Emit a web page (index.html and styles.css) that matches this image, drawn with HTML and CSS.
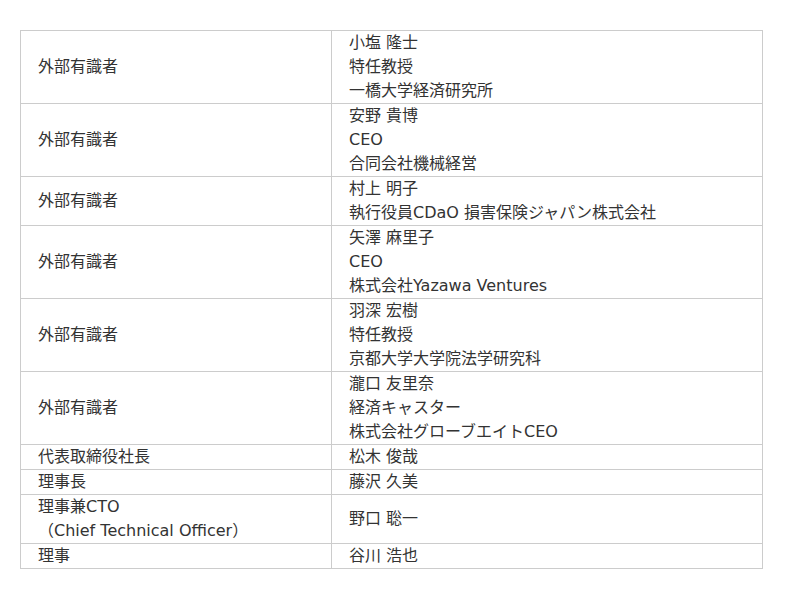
FILE: index.html
```html
<!DOCTYPE html>
<html lang="ja">
<head>
<meta charset="utf-8">
<link rel="stylesheet" href="styles.css">
</head>
<body>
<div class="wrap">
<table class="members">
<colgroup><col class="c1"><col class="c2"></colgroup>
<tbody>
<tr><td>外部有識者</td><td>小塩 隆士<br>特任教授<br>一橋大学経済研究所</td></tr>
<tr><td>外部有識者</td><td>安野 貴博<br>CEO<br>合同会社機械経営</td></tr>
<tr><td>外部有識者</td><td>村上 明子<br>執行役員CDaO 損害保険ジャパン株式会社</td></tr>
<tr><td>外部有識者</td><td>矢澤 麻里子<br>CEO<br>株式会社Yazawa Ventures</td></tr>
<tr><td>外部有識者</td><td>羽深 宏樹<br>特任教授<br>京都大学大学院法学研究科</td></tr>
<tr><td>外部有識者</td><td>瀧口 友里奈<br>経済キャスター<br>株式会社グローブエイトCEO</td></tr>
<tr><td>代表取締役社長</td><td>松木 俊哉</td></tr>
<tr><td>理事長</td><td>藤沢 久美</td></tr>
<tr><td>理事兼CTO<br>（Chief Technical Officer）</td><td>野口 聡一</td></tr>
<tr><td>理事</td><td>谷川 浩也</td></tr>
</tbody>
</table>
</div>
</body>
</html>
```
FILE: styles.css
```css
html, body {
  margin: 0;
  padding: 0;
  background: #fff;
}
.wrap {
  padding: 30px 20px;
}
.members {
  border-collapse: collapse;
  table-layout: fixed;
  width: 742px;
  font-family: "DejaVu Sans", "Noto Sans CJK JP", sans-serif;
  font-size: 16px;
  line-height: 24px;
  color: #333;
}
.c1 { width: 311px; }
.c2 { width: 431px; }
.members td {
  border: 1px solid #ccc;
  padding: 0 17px;
  vertical-align: middle;
}
```
